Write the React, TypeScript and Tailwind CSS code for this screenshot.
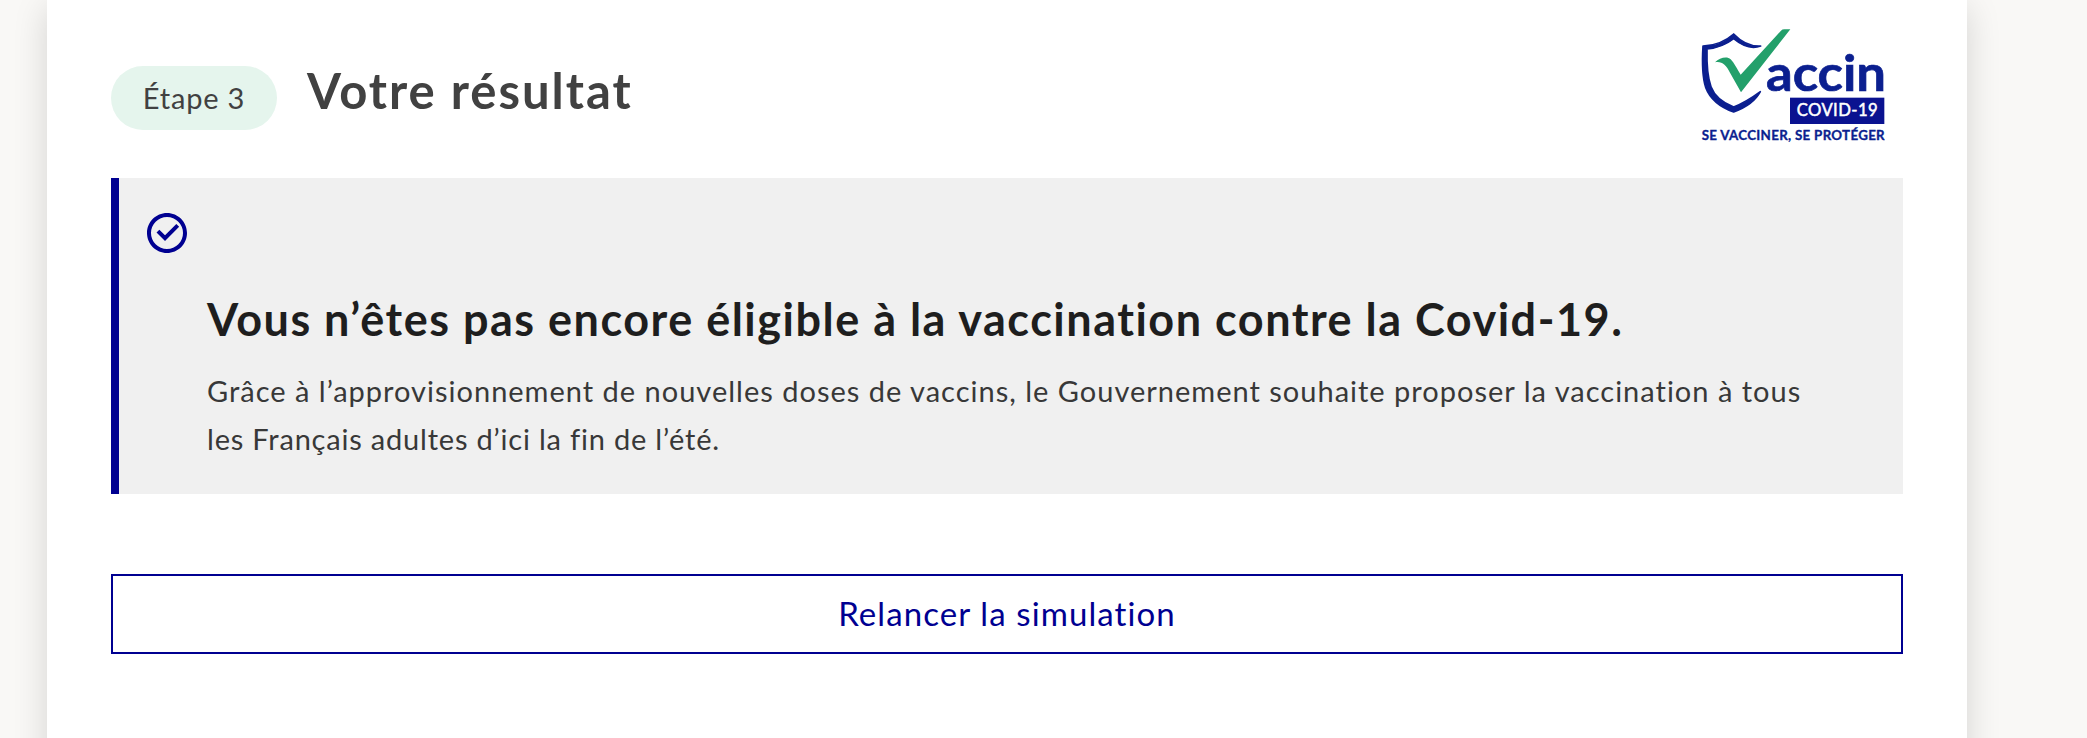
import type { ReactNode } from "react";

const FONT = "font-['Lato','Open_Sans',sans-serif]";

function VaccinLogo() {
  return (
    <svg
      viewBox="60 51 555 351"
      className="mt-[27px] mr-[18px] h-[117px] w-[185px] shrink-0"
      role="img"
      aria-label="Vaccin Covid-19"
    >
      {/* shield outline */}
      <path
        d="M242 108 C208 110 184 96 161 72 C134 96 108 107 69 108 C66 158 66 198 77 232 C89 264 120 291 161 306 C200 292 226 273 241 245 C211 267 187 281 161 291 C124 276 103 257 93 230 C82 200 80 158 81 117 C113 114 138 104 161 86 C185 106 212 119 242 108 Z"
        fill="#0b1f8f"
        stroke="#0b1f8f"
        strokeWidth="5"
        strokeLinejoin="round"
      />
      <path
        d="M105 157 C119 143 141 137 152 148 C162 158 172 178 182 194 L303 62 Q307 58 313 58 L331 58 L183 247 L150 188 C138 164 125 153 105 157 Z"
        fill="#23a06b"
      />
      <text
        x="258"
        y="242"
        textLength="360"
        lengthAdjust="spacingAndGlyphs"
        fontFamily="Lato, sans-serif"
        fontSize="147"
        fontWeight="700"
        stroke="#0b1f8f"
        strokeWidth="2"
        fill="#0b1f8f"
      >
        accin
      </text>
      <rect x="330" y="263" width="283" height="79" fill="#0a1290" />
      <text
        x="350"
        y="319"
        textLength="243"
        lengthAdjust="spacing"
        fontFamily="Lato, sans-serif"
        fontSize="50"
        fontWeight="400"
        stroke="#fff"
        strokeWidth="1.5"
        fill="#fff"
      >
        COVID-19
      </text>
      <text
        x="65"
        y="391"
        textLength="549"
        lengthAdjust="spacing"
        fontFamily="Lato, sans-serif"
        fontSize="40"
        fontWeight="700"
        stroke="#0b1f8f"
        strokeWidth="1"
        fill="#0b1f8f"
      >
        SE VACCINER, SE PROTÉGER
      </text>
    </svg>
  );
}

function CheckCircle() {
  return (
    <svg viewBox="0 0 24 24" className="size-12 shrink-0" fill="currentColor" aria-hidden>
      <path d="M12 22C6.477 22 2 17.523 2 12S6.477 2 12 2s10 4.477 10 10-4.477 10-10 10zm0-2a8 8 0 1 0 0-16 8 8 0 0 0 0 16zm-.997-4L6.76 11.757l1.414-1.414 2.829 2.829 5.656-5.657 1.415 1.414L11.003 16z" />
    </svg>
  );
}

interface AlertProps {
  title: string;
  children: ReactNode;
}

function Alert({ title, children }: AlertProps) {
  return (
    <section className="flex h-[316px] border-l-8 border-[#000091] bg-[#f0f0f0] pl-6">
      <div className="pt-[31px] text-[#000091]">
        <CheckCircle />
      </div>
      <div className="pt-[111px] pl-4">
        <h2 className="text-[45px] leading-[60px] font-bold tracking-[1.5px] whitespace-nowrap text-[#1e1e1e]">{title}</h2>
        <p className="mt-[18px] text-[29px] leading-[48px] tracking-[1px] whitespace-nowrap text-[#383838]">{children}</p>
      </div>
    </section>
  );
}

export default function App() {
  return (
    <div className={`h-[738px] overflow-hidden bg-[#f9f8f6] pl-[47px] ${FONT}`}>
      <main className="h-[800px] w-[1920px] bg-white px-16 shadow-[0_8px_32px_rgba(0,0,0,0.15)]">
        <header className="flex h-[178px] items-start">
          <div className="mt-[66px] flex h-16 w-[166px] shrink-0 items-center justify-center rounded-[32px] bg-[#e5f5ed] text-[29px] tracking-[0.8px] whitespace-nowrap text-[#414141]">
            Étape 3
          </div>
          <h1 className="mt-[60px] ml-[30px] grow text-[49px] leading-[60px] font-bold tracking-[2px] text-[#414141]">
            Votre résultat
          </h1>
          <VaccinLogo />
        </header>
        <Alert title="Vous n’êtes pas encore éligible à la vaccination contre la Covid-19.">
          Grâce à l’approvisionnement de nouvelles doses de vaccins, le Gouvernement souhaite proposer la vaccination à tous
          <br />
          <span className="tracking-[0.8px]">les Français adultes d’ici la fin de l’été.</span>
        </Alert>
        <button
          type="button"
          className="mt-20 h-20 w-full border-2 border-[#000091] bg-white pb-0.5 text-[33px] leading-[48px] tracking-[1.1px] text-[#000091]"
        >
          Relancer la simulation
        </button>
      </main>
    </div>
  );
}
